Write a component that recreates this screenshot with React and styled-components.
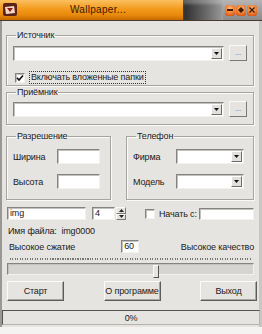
import React from "react"
import styled, { createGlobalStyle } from "styled-components"

const GlobalStyle = createGlobalStyle`
  html, body {
    margin: 0;
    padding: 0;
    background: #f4f3f1;
  }
  body {
    font-family: "Liberation Sans", Arial, sans-serif;
    font-size: 9px;
    letter-spacing: -0.15px;
    color: #1a1a1a;
  }
`

const DropArrow = () => (
  <ComboButton>
    <svg width="5" height="3" viewBox="0 0 5 3">
      <path d="M0 0 L5 0 L2.5 3 Z" fill="#111" />
    </svg>
  </ComboButton>
)

const App = () => (
  <>
    <GlobalStyle />
    <Window>
      <TitleBar>
        <AppIcon>
          <svg width="12" height="10" viewBox="0 0 12 10">
            <path d="M1 2 L10 1 L11 8 L2 9 Z" fill="#f4d9c8" />
            <path d="M3 3 L9 3 L6 7 Z" fill="#8a1d12" />
          </svg>
        </AppIcon>
        <TitleText>Wallpaper...</TitleText>
        <TitleDark />
        <TitleButtons>
          <CapButton>
            <svg width="8" height="8" viewBox="0 0 8 8">
              <rect x="1" y="3" width="6" height="2" fill="#3a1a08" />
            </svg>
          </CapButton>
          <CapButton>
            <svg width="8" height="8" viewBox="0 0 8 8">
              <path d="M4 1 L7 4 L4 7 L1 4 Z" fill="#3a1a08" />
            </svg>
          </CapButton>
          <CapButton>
            <svg width="8" height="8" viewBox="0 0 8 8">
              <path d="M1.5 1.5 L6.5 6.5 M6.5 1.5 L1.5 6.5" stroke="#3a1a08" strokeWidth="1.4" />
            </svg>
          </CapButton>
        </TitleButtons>
      </TitleBar>

      <Body>
        <Group $top={9} $pt={5} $pb={1}>
          <Legend>Источник</Legend>
          <PathRow>
            <Combo $width={211}>
              <DropArrow />
            </Combo>
            <BrowseButton>...</BrowseButton>
          </PathRow>
          <CheckRow $mt={10}>
            <CheckBox>
              <svg width="8" height="8" viewBox="0 0 8 8">
                <path d="M1 3.8 L3 6 L7 1.5" stroke="#111" strokeWidth="1.6" fill="none" />
              </svg>
            </CheckBox>
            <FocusLabel>Включать вложенные папки</FocusLabel>
          </CheckRow>
        </Group>

        <Group $top={1} $pt={4} $pb={7}>
          <Legend>Приёмник</Legend>
          <PathRow>
            <Combo $width={211}>
              <DropArrow />
            </Combo>
            <BrowseButton>...</BrowseButton>
          </PathRow>
        </Group>

        <Columns>
          <Group $top={0} $pt={8} $pb={10} $width={105}>
            <Legend>Разрешение</Legend>
            <FieldRow>
              <FieldLabel $width={44}>Ширина</FieldLabel>
              <TextBox $width={43} />
            </FieldRow>
            <FieldRow $mt={10}>
              <FieldLabel $width={44}>Высота</FieldLabel>
              <TextBox $width={43} />
            </FieldRow>
          </Group>
          <Group $top={0} $pt={8} $pb={10} $width={128}>
            <Legend>Телефон</Legend>
            <FieldRow>
              <FieldLabel $width={43}>Фирма</FieldLabel>
              <Combo $width={68}>
                <DropArrow />
              </Combo>
            </FieldRow>
            <FieldRow $mt={10}>
              <FieldLabel $width={43}>Модель</FieldLabel>
              <Combo $width={68}>
                <DropArrow />
              </Combo>
            </FieldRow>
          </Group>
        </Columns>

        <NameRow>
          <TextBox $width={79} $height={13}>img</TextBox>
          <SpinBox>
            <TextBox $width={23} $height={13}>4</TextBox>
            <SpinArrows>
              <SpinArrow>
                <svg width="5" height="3" viewBox="0 0 5 3"><path d="M0 3 L2.5 0 L5 3 Z" fill="#222" /></svg>
              </SpinArrow>
              <SpinArrow>
                <svg width="5" height="3" viewBox="0 0 5 3"><path d="M0 0 L2.5 3 L5 0 Z" fill="#222" /></svg>
              </SpinArrow>
            </SpinArrows>
          </SpinBox>
          <StartFrom>
            <CheckBox />
            <span>Начать с:</span>
          </StartFrom>
          <TextBox $width={55} $height={12} />
        </NameRow>

        <FileName>Имя файла:&nbsp; img0000</FileName>

        <QualityRow>
          <span>Высокое сжатие</span>
          <QualityBox>60</QualityBox>
          <QualityRight>Высокое качество</QualityRight>
        </QualityRow>

        <Ticks />
        <Track>
          <Thumb style={{ left: "59%" }} />
        </Track>

        <ButtonRow>
          <PushButton>Старт</PushButton>
          <PushButton>О программе</PushButton>
          <PushButton>Выход</PushButton>
        </ButtonRow>
      </Body>

      <StatusBar>0%</StatusBar>
    </Window>
  </>
)

export default App

const Window = styled.div`
  width: 262px;
  height: 327px;
  box-sizing: border-box;
  background: #e6e4e0;
  border-left: 2px solid #9a9894;
  border-right: 3px solid #c9c7c3;
  display: flex;
  flex-direction: column;
`

const TitleBar = styled.div`
  height: 21px;
  display: flex;
  align-items: stretch;
  margin-left: -2px;
  margin-right: -3px;
  background: linear-gradient(#fbc060, #f39a1c 45%, #e98a0c 75%, #c56a08);
  border-bottom: 1px solid #4a3a2a;
  box-sizing: border-box;
`

const AppIcon = styled.div`
  width: 14px;
  height: 13px;
  margin: 3px 0 0 3px;
  border-radius: 2px;
  background: #5b2418;
  display: flex;
  align-items: center;
  justify-content: center;
`

const TitleText = styled.span`
  flex: 1;
  display: flex;
  align-items: center;
  justify-content: center;
  font-size: 10px;
  letter-spacing: 0.3px;
  color: #3c1a00;
  padding: 0 4px 1px 0;
`

const TitleDark = styled.div`
  width: 40px;
  background: linear-gradient(90deg, #2c2c2c, #6b6b6b 60%, #9a9a9a);
  box-shadow: inset 0 4px 3px rgba(255, 255, 255, 0.25);
`

const TitleButtons = styled.div`
  width: 37px;
  display: flex;
  align-items: center;
  gap: 1px;
  padding-left: 2px;
  background: linear-gradient(#b5b5b5, #8a8a8a);
`

const CapButton = styled.div`
  width: 10px;
  height: 11px;
  border-radius: 3px;
  background: radial-gradient(circle at 50% 35%, #ffc07a, #e8661c 70%, #b84410);
  display: flex;
  align-items: center;
  justify-content: center;
`

const Body = styled.div`
  flex: 1;
  display: flex;
  flex-direction: column;
  padding: 0 5px 0 4px;
`

const Group = styled.fieldset`
  margin: ${(p) => p.$top}px 0 0 0;
  padding: ${(p) => p.$pt}px 6px ${(p) => p.$pb}px 6px;
  width: ${(p) => (p.$width ? `${p.$width}px` : "auto")};
  box-sizing: border-box;
  border: 1px solid #a6a4a0;
  box-shadow: inset 1px 1px 0 #fbfaf8, 1px 1px 0 #fbfaf8;
  min-width: 0;
`

const Legend = styled.legend`
  padding: 0 1px;
  margin-left: 3px;
  font-size: 9px;
  line-height: 10px;
  color: #1a1a1a;
`

const PathRow = styled.div`
  display: flex;
  align-items: center;
  gap: 5px;
`

const Sunken = styled.div`
  box-sizing: border-box;
  background: #fff;
  border: 1px solid;
  border-color: #85837f #f2f1ee #f2f1ee #85837f;
  box-shadow: inset 1px 1px 0 #c3c1bd;
`

const Combo = styled(Sunken)`
  width: ${(p) => p.$width}px;
  height: 15px;
  display: flex;
  justify-content: flex-end;
  align-items: center;
  padding-right: 1px;
`

const ComboButton = styled.div`
  width: 11px;
  height: 11px;
  box-sizing: border-box;
  border: 1px solid;
  border-color: #fff #6e6c68 #6e6c68 #fff;
  background: #e2e0dc;
  display: flex;
  align-items: center;
  justify-content: center;
`

const BrowseButton = styled.div`
  width: 18px;
  height: 16px;
  box-sizing: border-box;
  border: 1px solid;
  border-color: #fbfaf8 #7c7a76 #7c7a76 #fbfaf8;
  background: #e6e4e0;
  color: #777;
  font-size: 8px;
  display: flex;
  align-items: center;
  justify-content: center;
  padding-bottom: 2px;
`

const CheckRow = styled.div`
  margin-top: ${(p) => p.$mt || 0}px;
  display: flex;
  align-items: center;
  gap: 4px;
  padding-left: 2px;
`

const CheckBox = styled(Sunken)`
  width: 10px;
  height: 10px;
  display: flex;
  align-items: center;
  justify-content: center;
  flex-shrink: 0;
`

const FocusLabel = styled.span`
  border: 1px dotted #333;
  padding: 0 1px;
  line-height: 11px;
`

const Columns = styled.div`
  margin-top: 6px;
  display: flex;
  justify-content: space-between;
`

const FieldRow = styled.div`
  margin-top: ${(p) => p.$mt || 0}px;
  display: flex;
  align-items: center;
`

const FieldLabel = styled.span`
  width: ${(p) => p.$width}px;
  flex-shrink: 0;
`

const TextBox = styled(Sunken)`
  width: ${(p) => p.$width}px;
  height: ${(p) => p.$height || 15}px;
  line-height: ${(p) => (p.$height || 15) - 2}px;
  padding-left: 2px;
  flex-shrink: 0;
`

const NameRow = styled.div`
  margin-top: 7px;
  margin-left: 1px;
  display: flex;
  align-items: center;
`

const SpinBox = styled.div`
  margin-left: 6px;
  display: flex;
  align-items: center;
  gap: 1px;
`

const SpinArrows = styled.div`
  display: flex;
  flex-direction: column;
  height: 13px;
`

const SpinArrow = styled.div`
  width: 10px;
  height: 6.5px;
  box-sizing: border-box;
  border: 1px solid;
  border-color: #fbfaf8 #7c7a76 #7c7a76 #fbfaf8;
  background: #e6e4e0;
  display: flex;
  align-items: center;
  justify-content: center;
`

const StartFrom = styled.label`
  margin-left: 19px;
  width: 54px;
  display: flex;
  align-items: center;
  gap: 4px;
  white-space: nowrap;
`

const FileName = styled.div`
  margin-top: 5px;
  margin-left: 2px;
  line-height: 12px;
`

const QualityRow = styled.div`
  margin-top: 3px;
  margin-left: 3px;
  display: flex;
  align-items: center;
  height: 13px;
`

const QualityBox = styled(Sunken)`
  margin-left: 46px;
  width: 18px;
  height: 13px;
  line-height: 11px;
  padding-left: 2px;
`

const QualityRight = styled.span`
  margin-left: auto;
`

const Ticks = styled.div`
  margin: 5px 2px 0 4px;
  height: 2px;
  background: repeating-linear-gradient(90deg, #5a5854 0 1px, transparent 1px 2.5px);
  opacity: 0.8;
`

const Track = styled(Sunken)`
  position: relative;
  margin-top: 3px;
  margin-left: 1px;
  height: 12px;
  background: #d6d4d0;
`

const Thumb = styled.div`
  position: absolute;
  top: 1px;
  width: 6px;
  height: 13px;
  box-sizing: border-box;
  border: 1px solid;
  border-color: #fbfaf8 #55534f #55534f #fbfaf8;
  background: #e6e4e0;
`

const ButtonRow = styled.div`
  margin-top: 6px;
  margin-left: 1px;
  margin-right: -3px;
  display: flex;
  justify-content: space-between;
`

const PushButton = styled.div`
  width: 57px;
  height: 20px;
  box-sizing: border-box;
  border: 1px solid;
  border-color: #fbfaf8 #5e5c58 #5e5c58 #fbfaf8;
  box-shadow: inset -1px -1px 0 #a8a6a2;
  background: #e6e4e0;
  display: flex;
  align-items: center;
  justify-content: center;
  white-space: nowrap;
`

const StatusBar = styled.div`
  margin: 0 -1px 2px 0;
  height: 15px;
  box-sizing: border-box;
  border: 1px solid;
  border-color: #55534f #b5b3af #b5b3af #55534f;
  background: #e6e4e0;
  display: flex;
  align-items: center;
  justify-content: center;
`
